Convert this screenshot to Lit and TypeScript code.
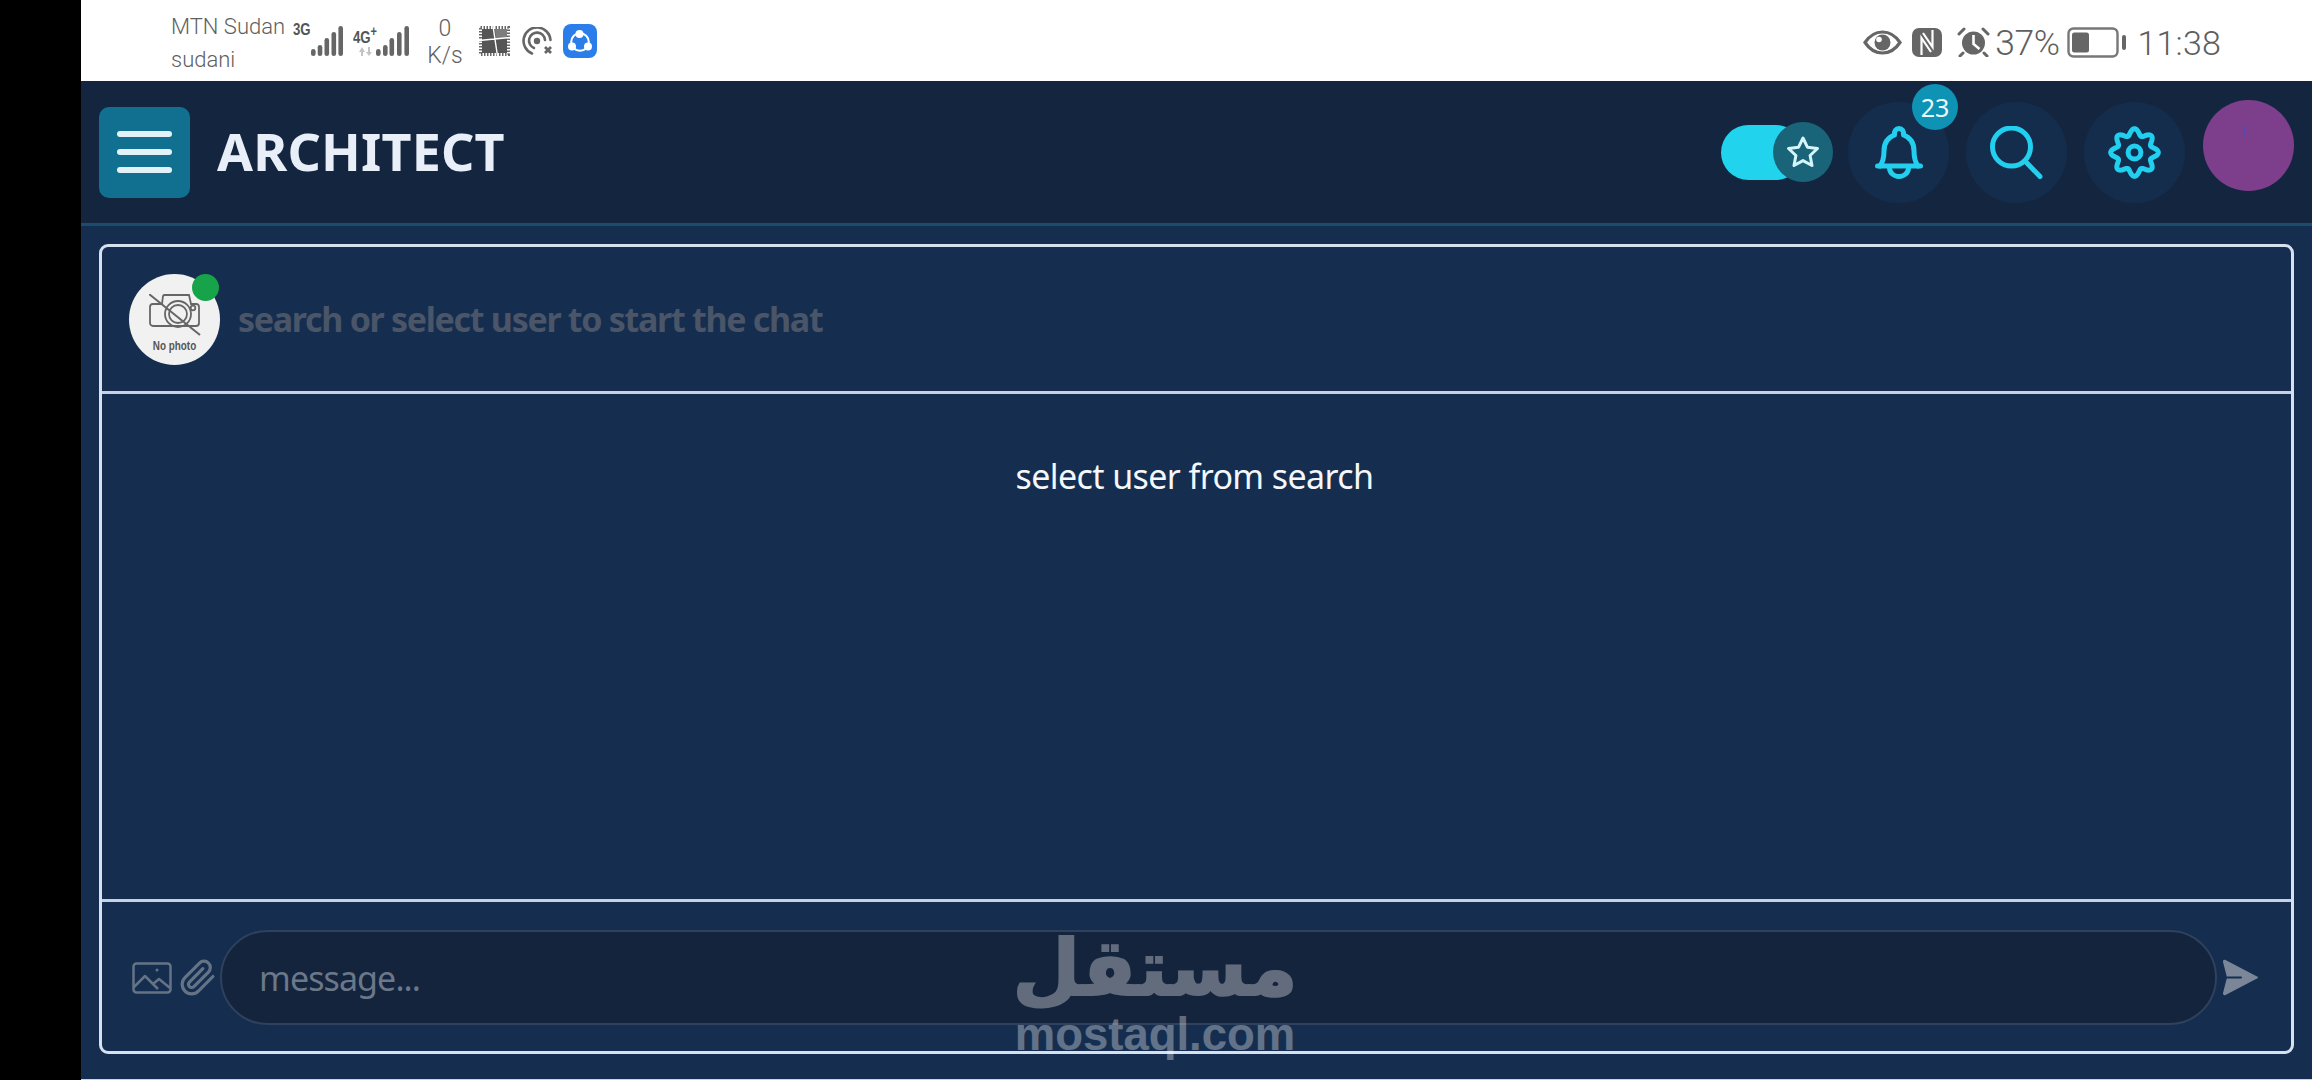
import { LitElement, html, css, svg } from "lit";
import { customElement } from "lit/decorators.js";

function gearPath(): string {
  const pts: string[] = [];
  for (let i = 0; i < 240; i++) {
    const t = (i / 240) * Math.PI * 2;
    const r = 20.6 + 3.2 * Math.cos(8 * t);
    pts.push(`${(26.5 + r * Math.cos(t)).toFixed(2)} ${(26.5 + r * Math.sin(t)).toFixed(2)}`);
  }
  return "M" + pts.join("L") + "Z";
}

const HEIGHTS = [7, 11, 18, 24, 30];
const bars = (xs: number[]) =>
  xs.map((x, i) =>
    svg`<rect x=${x} y=${30 - HEIGHTS[i]} width="4.6" height=${HEIGHTS[i]} rx="2.3" fill="#666"/>`
  );

@customElement("app-root")
export class AppRoot extends LitElement {
  static styles = css`
    :host { display: flex; position: relative; width: 2312px; height: 1080px; overflow: hidden; background: #000; font-family: "Noto Sans", sans-serif; }
    .side { width: 81px; flex: none; background: #000; }
    .main { flex: 1; display: flex; flex-direction: column; min-width: 0; background: #152e4f; border-bottom: 1px solid #c8d4e4; }

    .status { height: 81px; flex: none; background: #fff; display: flex; justify-content: space-between; align-items: center; color: #5f5f5f; font-family: Roboto, sans-serif; font-weight: 300; }
    .st-left { display: flex; align-items: center; padding-left: 90px; height: 100%; }
    .st-right { display: flex; align-items: center; padding: 3px 91px 0 0; height: 100%; box-sizing: border-box; }
    .carrier { width: 122px; font-size: 22px; line-height: 33px; white-space: nowrap; padding-top: 5px; }
    .net { font-family: "Liberation Sans", sans-serif; font-weight: 700; font-size: 16.5px; line-height: 14px; color: #555; white-space: nowrap; transform: scaleX(.8); transform-origin: left; }
    .net3 { width: 18px; margin-top: -24px; }
    .net4box { position: relative; width: 23px; height: 30px; margin-left: 10px; flex: none; }
    .net4 { display: block; margin-top: -1px; }
    .arrows { position: absolute; left: 6px; top: 21px; }
    .speed { width: 40px; margin-left: 16px; text-align: center; font-size: 23px; line-height: 27px; padding-top: 3px; }
    .ml-grid { margin-left: 14px; }
    .ml-12 { margin-left: 12px; }
    .ml-10 { margin-left: 10px; }
    .ml-15 { margin-left: 15px; }
    .ml-8 { margin-left: 8px; }
    .pct { font-size: 35.5px; letter-spacing: -.5px; margin-left: 5px; padding-top: 1px; }
    .clock { font-size: 34px; margin-left: 11px; letter-spacing: .2px; padding-top: 1px; }

    .nav { height: 142px; flex: none; background: #14263f; border-bottom: 3px solid #1a4d6e; display: flex; align-items: center; padding: 0 18px; box-sizing: content-box; }
    .burger { width: 91px; height: 91px; border-radius: 10px; background: #11708f; display: flex; flex-direction: column; justify-content: center; align-items: center; gap: 12px; flex: none; }
    .burger i { display: block; width: 55px; height: 6px; border-radius: 3px; background: #e3f2f8; }
    .title { margin-left: 27px; font-size: 52px; font-weight: 700; color: #e8eff8; letter-spacing: .2px; line-height: 1; padding-bottom: 2px; }
    .spacer { flex: 1; }
    .toggle { position: relative; width: 112px; height: 60px; flex: none; }
    .pill { position: absolute; left: 0; top: 3px; width: 82px; height: 55px; border-radius: 28px; background: #22d3ee; }
    .knob { position: absolute; right: 0; top: 0; width: 60px; height: 60px; border-radius: 50%; background: #1a6479; display: flex; align-items: center; justify-content: center; }
    .round { position: relative; width: 101px; height: 101px; border-radius: 50%; background: #152d4c; display: flex; align-items: center; justify-content: center; flex: none; }
    .bell { margin-left: 15px; }
    .search { margin-left: 17px; }
    .gear { margin-left: 17px; }
    .badge { position: absolute; left: 64px; top: -18px; width: 46px; height: 46px; border-radius: 50%; background: #0e93b5; color: #eef9fc; font-size: 25px; display: flex; align-items: center; justify-content: center; font-weight: 400; }
    .avatar { position: relative; width: 91px; height: 91px; border-radius: 50%; background: #7d3f8c; margin-left: 18px; flex: none; margin-top: -14px; }
    .avatar svg { position: absolute; left: 40px; top: 25px; }

    .content { flex: 1; display: flex; flex-direction: column; padding: 18px 18px 25px; min-height: 0; }
    .card { flex: 1; display: flex; flex-direction: column; border: 3px solid #d6e0ef; border-radius: 9px; min-height: 0; }
    .head { height: 147px; flex: none; display: flex; align-items: center; padding-left: 27px; border-bottom: 3px solid #c6d2e4; box-sizing: border-box; }
    .photo { position: relative; width: 91px; height: 91px; border-radius: 50%; background: #f1f1f1; flex: none; display: flex; flex-direction: column; align-items: center; }
    .photo svg { margin-top: 20px; flex: none; }
    .nophoto { font-family: "Liberation Sans", sans-serif; font-size: 13px; font-weight: 700; color: #555; line-height: 13px; margin-top: 3px; white-space: nowrap; transform: scaleX(.76); }
    .dot { position: absolute; right: 1px; top: 0; width: 27px; height: 27px; border-radius: 50%; background: #16a34a; }
    .hint { margin-left: 18px; font-size: 34px; font-weight: 700; color: #4a5568; white-space: nowrap; letter-spacing: -1.3px; }
    .body { flex: 1; display: flex; justify-content: center; padding-top: 58px; color: #f4f7fb; font-size: 34px; line-height: 48px; letter-spacing: -.6px; padding-right: 4px; }
    .foot { height: 152px; flex: none; border-top: 3px solid #c6d2e4; display: flex; align-items: center; padding-left: 30px; padding-top: 2px; box-sizing: border-box; }
    .clip { margin-left: 7px; }
    .input { margin-left: 3px; flex: none; width: 1997px; height: 95px; box-sizing: border-box; border: 2px solid #2f415c; border-radius: 48px; background: #14243d; display: flex; align-items: center; padding-left: 37px; color: #6b7889; font-size: 34px; letter-spacing: -.9px; }
    .send { margin-left: 5px; }

    .wm { position: absolute; left: 1017px; top: 922px; width: 276px; display: flex; flex-direction: column; align-items: center; color: #fff; opacity: .33; pointer-events: none; }
    .wm-ar { font-family: "DejaVu Sans", sans-serif; font-weight: 700; font-size: 78px; line-height: 92px; white-space: nowrap; -webkit-text-stroke: 2px #fff; }
    .wm-en { font-family: "Liberation Sans", sans-serif; font-weight: 700; font-size: 45.5px; line-height: 42px; white-space: nowrap; }
  `;

  render() {
    return html`
      <div class="side"></div>
      <div class="main">
        <div class="status">
          <div class="st-left">
            <div class="carrier">MTN Sudan<br />sudani</div>
            <span class="net net3">3G</span>
            <svg width="32" height="30" viewBox="0 0 32 30">${bars([0, 6.7, 13.5, 20.5, 27.4])}</svg>
            <div class="net4box">
              <span class="net net4">4G<sup>+</sup></span>
              <svg class="arrows" width="14" height="9" viewBox="0 0 14 9"><path d="M3 0 0 5h2v4h2V5h2zM10 9l3-4h-2V0H9v5H7z" fill="#c4c4c4"/></svg>
            </div>
            <svg width="33" height="30" viewBox="0 0 33 30">${bars([0, 7, 13.5, 21, 28.4])}</svg>
            <div class="speed">0<br />K/s</div>
            <svg class="ml-grid" width="31" height="30" viewBox="0 0 31 30">
              <rect x="1.5" y="1.5" width="28" height="27" fill="none" stroke="#666" stroke-width="3" stroke-dasharray="1.5 1.5"/>
              <rect x="3" y="3" width="25" height="24" fill="#555"/>
              <path d="M16 3h12v9l-11 1z" fill="#7d7d7d"/>
              <path d="M0 14.5 31 11.5M14 0l4.5 30" stroke="#fff" stroke-width="1.4" fill="none"/>
            </svg>
            <svg class="ml-12" width="31" height="28" viewBox="0 0 31 28" fill="none" stroke="#666" stroke-width="2.6" stroke-linecap="round">
              <path d="M10 26.5A13.5 13.5 0 1 1 28.5 13"/><path d="M12 21A8 8 0 1 1 23 13"/>
              <circle cx="15" cy="14" r="3.2" fill="#666" stroke="none"/><path d="M23 20l6 6M29 20l-6 6" stroke-width="2.8" stroke-linecap="butt"/>
            </svg>
            <svg class="ml-10" width="34" height="34" viewBox="0 0 34 34">
              <rect width="34" height="34" rx="8" fill="#2b7ee9"/>
              <circle cx="17" cy="18" r="8.8" fill="none" stroke="#fff" stroke-width="2"/>
              <circle cx="16.5" cy="10" r="4" fill="#fff"/><circle cx="9" cy="22.5" r="4" fill="#fff"/><circle cx="25" cy="22.5" r="4" fill="#fff"/>
            </svg>
          </div>
          <div class="st-right">
            <svg width="39" height="25" viewBox="0 0 39 25">
              <path d="M2 12.5C7 5 13 2 19.5 2S32 5 37 12.5C32 20 26 23 19.5 23S7 20 2 12.5Z" fill="none" stroke="#666" stroke-width="3.2"/>
              <circle cx="19.5" cy="12.5" r="8" fill="#666"/><circle cx="16" cy="9.5" r="2.8" fill="#fff"/>
            </svg>
            <svg class="ml-10" width="30" height="29" viewBox="0 0 30 29">
              <rect width="30" height="29" rx="7" fill="#666"/>
              <path d="M9.5 27V10L19 24M20.5 2V19L11 5" fill="none" stroke="#fff" stroke-width="2.2"/>
            </svg>
            <svg class="ml-15" width="33" height="30" viewBox="0 0 33 30">
              <circle cx="16.5" cy="16" r="11.5" fill="#666"/><path d="M16.5 8v9l6 5" stroke="#fff" stroke-width="2.6" fill="none"/>
              <path d="M2 7 7 2M31 7l-5-5M6 26l-3 3M27 26l3 3" stroke="#666" stroke-width="3" stroke-linecap="round"/>
            </svg>
            <span class="pct">37%</span>
            <svg class="ml-8" width="59" height="31" viewBox="0 0 59 31">
              <rect x="1.5" y="1.5" width="49" height="28" rx="5" fill="none" stroke="#777" stroke-width="2.4"/>
              <rect x="5" y="5.5" width="17" height="20" rx="2.5" fill="#666"/>
              <rect x="55" y="8" width="4" height="15" rx="2" fill="#666"/>
            </svg>
            <span class="clock">11:38</span>
          </div>
        </div>

        <div class="nav">
          <div class="burger"><i></i><i></i><i></i></div>
          <div class="title">ARCHITECT</div>
          <div class="spacer"></div>
          <div class="toggle">
            <div class="pill"></div>
            <div class="knob">
              <svg width="36" height="34" viewBox="0 0 36 34"><path d="M18 3l4.4 9.2 10.1 1.3-7.4 7 1.9 10L18 25.6l-9 4.9 1.9-10-7.4-7 10.1-1.3z" fill="none" stroke="#d4f6fb" stroke-width="3" stroke-linejoin="round"/></svg>
            </div>
          </div>
          <div class="round bell">
            <svg width="48" height="53" viewBox="0 0 48 53" fill="none" stroke="#22cfee" stroke-width="5" stroke-linecap="round" stroke-linejoin="round">
              <path d="M5 40C8 36 9 31 9 25C9 16 14 11 19.5 9C19 5 21 2.5 24 2.5C27 2.5 29 5 28.5 9C34 11 39 16 39 25C39 31 40 36 43 40"/>
              <path d="M2.5 40H45.5"/><path d="M14.5 42a9.5 8.5 0 0 0 19 0"/>
            </svg>
            <span class="badge">23</span>
          </div>
          <div class="round search">
            <svg width="53" height="53" viewBox="0 0 53 53" fill="none" stroke="#22cfee" stroke-width="5" stroke-linecap="round">
              <circle cx="21.5" cy="21" r="19"/><path d="M35 35 50 50.5"/>
            </svg>
          </div>
          <div class="round gear">
            <svg width="53" height="53" viewBox="0 0 53 53" fill="none" stroke="#22cfee" stroke-width="5">
              <path d=${gearPath()}/><circle cx="26.5" cy="26.5" r="6.4"/>
            </svg>
          </div>
          <div class="avatar"><svg width="3" height="12" viewBox="0 0 3 12"><path d="M1.5 0V12" stroke="#5b49b0" stroke-width="2"/></svg></div>
        </div>

        <div class="content">
          <div class="card">
            <div class="head">
              <div class="photo">
                <svg width="52" height="42" viewBox="0 0 52 42" fill="none" stroke="#666" stroke-width="1.8">
                  <path d="M1 13a3 3 0 0 1 3-3h9l1-8a2 2 0 0 1 2-1h24l2 9h5a3 3 0 0 1 3 3v16a3 3 0 0 1-3 3H4a3 3 0 0 1-3-3Z"/>
                  <circle cx="29" cy="20" r="13"/><circle cx="29" cy="20" r="9"/><circle cx="44" cy="14" r="2.3"/>
                  <path d="M0 0 51 41" stroke-width="2"/>
                </svg>
                <span class="nophoto">No photo</span>
                <span class="dot"></span>
              </div>
              <div class="hint">search or select user to start the chat</div>
            </div>
            <div class="body">select user from search</div>
            <div class="foot">
              <svg width="40" height="32" viewBox="0 0 40 32" fill="none" stroke="#657386" stroke-width="2.5" stroke-linejoin="round">
                <rect x="1.5" y="1.5" width="37" height="29" rx="3"/>
                <path d="M2 25 13 14l13 13M21 22l6-5 11 9"/><circle cx="25" cy="8" r="1.5" fill="#657386" stroke="none"/>
              </svg>
              <svg class="clip" width="38" height="40" viewBox="0 0 24 24" fill="none" stroke="#657386" stroke-width="2" stroke-linecap="round" stroke-linejoin="round">
                <path d="M21.44 11.05l-9.19 9.19a6 6 0 0 1-8.49-8.49l9.19-9.19a4 4 0 0 1 5.66 5.66l-9.2 9.19a2 2 0 0 1-2.83-2.83l8.49-8.48"/>
              </svg>
              <div class="input">message...</div>
              <svg class="send" width="36" height="37" viewBox="0 0 36 37">
                <path d="M3.5 1 35 17.5a1 1 0 0 1 0 2L3.5 36c-1.5.6-2.8-.4-2.5-2L5 18.5 1 3C.7 1.4 2 .4 3.5 1Z" fill="#7b8798"/>
                <path d="M5 18.5H19" stroke="#152e4f" stroke-width="2" stroke-linecap="round"/>
              </svg>
            </div>
          </div>
        </div>
      </div>
      <div class="wm">
        <div class="wm-ar" dir="rtl">مستقل</div>
        <div class="wm-en">mostaql.com</div>
      </div>
    `;
  }
}
